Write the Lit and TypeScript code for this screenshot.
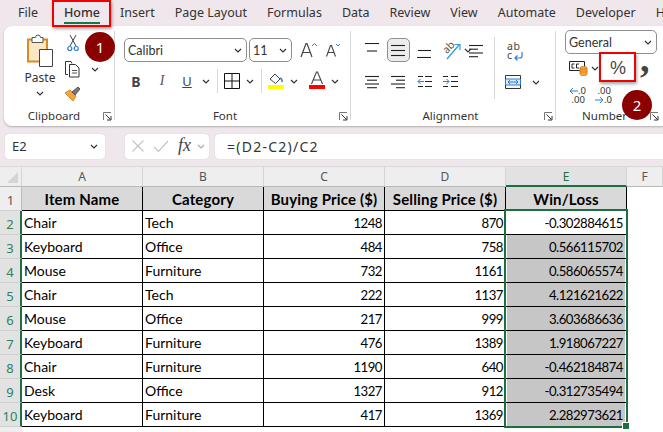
import { LitElement, css, html, svg, type TemplateResult } from 'lit';
import { customElement } from 'lit/decorators.js';

const TABS = ['File', 'Home', 'Insert', 'Page Layout', 'Formulas', 'Data', 'Review', 'View', 'Automate', 'Developer', 'H'];

const ROWS: [string, string, number, number, string][] = [
  ['Chair', 'Tech', 1248, 870, '-0.302884615'],
  ['Keyboard', 'Office', 484, 758, '0.566115702'],
  ['Mouse', 'Furniture', 732, 1161, '0.586065574'],
  ['Chair', 'Tech', 222, 1137, '4.121621622'],
  ['Mouse', 'Office', 217, 999, '3.603686636'],
  ['Keyboard', 'Furniture', 476, 1389, '1.918067227'],
  ['Chair', 'Furniture', 1190, 640, '-0.462184874'],
  ['Desk', 'Office', 1327, 912, '-0.312735494'],
  ['Keyboard', 'Furniture', 417, 1369, '2.282973621'],
];

const icon = (w: number, h: number, body: unknown): TemplateResult =>
  html`<svg width=${w} height=${h} viewBox="0 0 ${w} ${h}" fill="none" stroke="#333" stroke-width="1">${body}</svg>`;

const chevron = () => icon(8, 5, svg`<path d="M1 1l3 3 3-3" stroke-width="1.2"/>`);

const launcher = () =>
  icon(9, 9, svg`<path d="M.5 8V.5H8" stroke="#777"/><path d="M2.5 2.5l5 5M4 8h4V4" stroke="#333"/>`);

// [x, width, y] for each horizontal stroke of an alignment icon
const lines = (rows: [number, number, number][]) =>
  icon(15, 15, rows.map(([x, w, y]) => svg`<path d="M${x} ${y}h${w}" stroke="#222" stroke-width="1.1"/>`));

const ICONS = {
  paste: icon(28, 33, svg`
    <path d="M2 5.500h19v22H2z" fill="#fbe7c4" stroke="#d98a22" stroke-width="2"/>
    <path d="M6 3.500h3.500a2.500 2.500 0 0 1 5 0H17v5H6z" fill="#fff" stroke="#555"/>
    <path d="M13.500 15.500h13v17h-13z" fill="#fff" stroke="#444"/>`),
  scissors: icon(12, 18, svg`
    <path d="M3 1l6 11M9 1L3 12" stroke="#444"/>
    <circle cx="2.800" cy="14.500" r="2" stroke="#2b7cd3" stroke-width="1.200"/>
    <circle cx="9.200" cy="14.500" r="2" stroke="#2b7cd3" stroke-width="1.200"/>`),
  copy: icon(17, 18, svg`
    <path d="M4 14.500H1.500V1.500h5.500l1 2" stroke="#333"/>
    <path d="M5.500 4.500h6l3.500 3.500v9h-9.500z" fill="#fff" stroke="#333"/>
    <path d="M8 10.500h5M8 13h5" stroke="#555"/>`),
  brush: icon(17, 17, svg`
    <path d="M1 7l8 8 3-5-6-6z" fill="#f2a53a" stroke="#d98a22"/>
    <path d="M3 12l3 3M2 9l4 5" stroke="#fff"/>
    <path d="M8 6l6-5 2 2-5 6z" fill="#777" stroke="#555"/>`),
  grow: icon(17, 16, svg`<path d="M1 15L6 1.500h1L12 15M3 10.500h7" stroke="#444" stroke-width="1.200"/><path d="M12 4l2.500-2.500L17 4" stroke="#2b7cd3"/>`),
  shrink: icon(15, 14, svg`<path d="M.5 13.500L4.500 2.500h1l4 11M2 9.500h6" stroke="#444" stroke-width="1.100"/><path d="M10 1l2 2 2-2" stroke="#2b7cd3"/>`),
  borders: icon(16, 16, svg`<path d="M.5.500h15v15H.5zM8 .500v15M.5 8h15" stroke="#111"/>`),
  fill: icon(16, 20, svg`
    <path d="M2 8l5-5 5 5-4.500 4.500z" fill="#fff" stroke="#444"/>
    <path d="M12 7c2 1 2.500 3 2 4" stroke="#2b7cd3" stroke-width="1.600"/>
    <rect y="14" width="16" height="4" fill="#ffff00" stroke="none"/>`),
  fontColor: icon(16, 20, svg`
    <path d="M2.500 13L7.500 1h1l5 12M4.500 9h7" stroke="#444" stroke-width="1.100"/>
    <rect y="14" width="16" height="4" fill="#ff0000" stroke="none"/>`),
  orientArrow: icon(20, 20, svg`
    <path d="M5 19L17 5M12.500 4.500h5.500V10" stroke="#2b9be0" stroke-width="1.200"/>`),
  wrap: icon(18, 19, svg`
    <path d="M15 9v4a2 2 0 0 1-2 2H8M10.500 12.500L8 15l2.500 2.500" stroke="#2b7cd3" stroke-width="1.200"/>`),
  merge: icon(16, 16, svg`
    <path d="M.5 1.500h15M.5 14.500h15" stroke="#333"/>
    <path d="M.5 5h15v6H.5z" fill="#d8ecf9" stroke="#2b7cd3"/>
    <path d="M.5 1.500V5M15.500 1.500V5M.5 11v3.500M15.500 11v3.500" stroke="#333"/>
    <path d="M3 8h10M5 6l-2 2 2 2M11 6l2 2-2 2" stroke="#2b7cd3"/>`),
  indentLess: icon(15, 15, svg`
    <path d="M8 2.500h7M8 7.500h7M8 12.500h7M1 12.500h5M1 2.500h5" stroke="#222"/>
    <path d="M7 7.500H1M3.500 5L1 7.500 3.500 10" stroke="#2b7cd3"/>`),
  indentMore: icon(15, 15, svg`
    <path d="M8 2.500h7M8 7.500h7M8 12.500h7M0 12.500h5M0 2.500h5" stroke="#222"/>
    <path d="M0 7.500h6M3.500 5L6 7.500 3.500 10" stroke="#2b7cd3"/>`),
  accounting: icon(19, 16, svg`
    <path d="M.5 1.500h15v9H.5z" stroke="#222"/>
    <path d="M3 4h2.500M3 4v4h2.500M7.500 4H10M7.500 4v4H10" stroke="#222"/>
    <path d="M11 8v6c0 2 7 2 7 0V8" fill="#f4a83c" stroke="#d9801f"/>
    <ellipse cx="14.500" cy="8" rx="3.500" ry="1.500" fill="#f4a83c" stroke="#d9801f"/>
    <path d="M11 11c0 1.500 7 1.500 7 0" stroke="#d9801f"/>`),
  cross: icon(14, 14, svg`<path d="M1.500 1.500l11 11M12.500 1.500l-11 11" stroke="#c4c4c4" stroke-width="1.200"/>`),
  check: icon(16, 14, svg`<path d="M1 8l4.500 4.500L15 2" stroke="#c4c4c4" stroke-width="1.200"/>`),
  arrowLeft: icon(9, 8, svg`<path d="M9 4H1M4 1L1 4l3 3" stroke="#2b7cd3"/>`),
  arrowRight: icon(9, 8, svg`<path d="M0 4h8M5 1l3 3-3 3" stroke="#2b7cd3"/>`),
};

@customElement('app-root')
export class AppRoot extends LitElement {
  private group(label: string, width: number, body: TemplateResult, cls = '') {
    return html`<section class="group ${cls}" style="width:${width}px">
      <div class="group-body">${body}</div>
      <footer class="group-foot"><span class="group-label">${label}</span><span class="launch">${launcher()}</span></footer>
    </section>`;
  }

  private clipboard() {
    return html`<div class="paste">
        ${ICONS.paste}
        <span class="paste-label">Paste</span>
        ${chevron()}
      </div>
      <div class="clip-tools">
        ${ICONS.scissors}
        <div class="copy-row">${ICONS.copy}<span class="copy-chev">${chevron()}</span></div>
        ${ICONS.brush}
      </div>`;
  }

  private font() {
    return html`<div class="font-rows">
      <div class="font-top">
        <div class="select font-name"><span>Calibri</span>${chevron()}</div>
        <div class="select font-size"><span>11</span>${chevron()}</div>
        <span class="grow">${ICONS.grow}</span>
        <span class="shrink">${ICONS.shrink}</span>
      </div>
      <div class="font-bottom">
        <b class="style-b">B</b>
        <i class="style-i">I</i>
        <u class="style-u">U</u>
        <span class="chev-u">${chevron()}</span>
        <span class="vsep"></span>
        ${ICONS.borders}
        <span class="chev-f">${chevron()}</span>
        <span class="vsep"></span>
        ${ICONS.fill}
        <span class="chev-f">${chevron()}</span>
        <span class="color-a">${ICONS.fontColor}</span>
        <span class="chev-f">${chevron()}</span>
      </div>
    </div>`;
  }

  private alignment() {
    return html`<div class="align-main">
        <div class="align-grid">
          ${lines([[0, 14, 0.5], [2, 10, 8]])}
          <span class="pressed">${lines([[0, 14, 2.5], [0, 14, 7.5], [0, 14, 12.5]])}</span>
          ${lines([[1, 13, 7.5], [0, 14, 14.5]])}
          <span class="orient">
            <span class="orient-text">ab</span>${ICONS.orientArrow}<span class="chev-o">${chevron()}</span>
          </span>
          ${lines([[0, 14, 2.5], [0, 9, 6.2], [0, 14, 10], [0, 9, 13.7]])}
          ${lines([[0, 14, 2.5], [2, 10, 6.2], [0, 14, 10], [2, 10, 13.7]])}
          ${lines([[0, 14, 2.5], [5, 9, 6.2], [0, 14, 10], [5, 9, 13.7]])}
          ${ICONS.indentLess}
          ${ICONS.indentMore}
        </div>
        <span class="vsep tall"></span>
        <div class="wrap-col">
          <div class="wrap"><span class="wrap-text">ab<br />c</span><span class="wrap-arrow">${ICONS.wrap}</span></div>
          <div class="merge">${ICONS.merge}<span class="chev-m">${chevron()}</span></div>
        </div>
      </div>`;
  }

  private number() {
    return html`<div class="num-rows">
      <div class="select num-format"><span>General</span>${chevron()}</div>
      <div class="num-tools">
        ${ICONS.accounting}
        <span class="chev-ac">${chevron()}</span>
        <span class="percent">%</span>
        <span class="comma">,</span>
      </div>
      <div class="num-dec">
        <span class="dec">${ICONS.arrowLeft}<span class="dec-a">.0</span><span class="dec-b">.00</span></span>
        <span class="dec">
          <span class="dec-b">.00</span>${ICONS.arrowRight}<span class="dec-a">.0</span>
        </span>
      </div>
    </div>`;
  }

  render(): TemplateResult {
    return html`
      <nav class="tabs">
        ${TABS.map((t) => html`<span class="tab ${t === 'Home' ? 'active' : ''}">${t}</span>`)}
      </nav>
      <div class="ribbon">
        ${this.group('Clipboard', 111, this.clipboard(), 'g-clip')}
        ${this.group('Font', 236, this.font(), 'g-font')}
        ${this.group('Alignment', 205, this.alignment(), 'g-align')}
        ${this.group('Number', 103, this.number(), 'g-num')}
      </div>
      <div class="formula">
        <div class="box name-box"><span>E2</span>${chevron()}</div>
        <span class="dots"></span>
        <div class="box fx-box">
          ${ICONS.cross}${ICONS.check}
          <span class="fx">fx</span><span class="fx-chev">${chevron()}</span>
        </div>
        <div class="box formula-box">=(D2-C2)/C2</div>
      </div>
      <div class="sheet">
        <div class="hdr corner"><span class="tri"></span></div>
        ${['A', 'B', 'C', 'D', 'E', 'F'].map((c) => html`<div class="hdr col ${c === 'E' ? 'sel' : ''}">${c}</div>`)}

        <div class="hdr rowh">1</div>
        <div class="cell head">Item Name</div>
        <div class="cell head">Category</div>
        <div class="cell head">Buying Price ($)</div>
        <div class="cell head">Selling Price ($)</div>
        <div class="cell head">Win/Loss</div>
        <div class="blank"></div>

        ${ROWS.map(
          (r, i) => html`
            <div class="hdr rowh sel">${i + 2}</div>
            <div class="cell">${r[0]}</div>
            <div class="cell">${r[1]}</div>
            <div class="cell num">${r[2]}</div>
            <div class="cell num">${r[3]}</div>
            <div class="cell num result ${i > 0 ? 'shade' : ''}">${r[4]}</div>
            <div class="blank"></div>
          `
        )}
        <div class="hdr rowh end"></div>
        <div class="blank last"></div>

        <div class="selection"><span class="handle"></span></div>
      </div>

      <div class="red-box home-box"></div>
      <div class="red-box pct-box"></div>
      <div class="badge badge-1">1</div>
      <div class="badge badge-2">2</div>
    `;
  }

  static styles = css`
    :host {
      display: block;
      position: relative;
      width: 663px;
      height: 432px;
      overflow: hidden;
      background: #efe7eb;
      font-family: 'Noto Sans', sans-serif;
      color: #333;
    }

    svg {
      display: block;
      flex: none;
    }

    .tabs {
      display: flex;
      align-items: center;
      gap: 20px;
      height: 26px;
      padding: 0 0 2px 18px;
      box-sizing: border-box;
      font-size: 12.5px;
      white-space: nowrap;
    }

    .tab.active {
      position: relative;
      margin-left: 6px;
      font-weight: 500;
    }

    .tab.active::after {
      content: '';
      position: absolute;
      left: 0;
      right: 0;
      bottom: -3px;
      height: 2px;
      background: #107c41;
    }

    .ribbon {
      display: flex;
      width: 680px;
      height: 100px;
      margin-left: 4px;
      background: #fff;
      border-radius: 8px;
      box-shadow: 0 1px 2px rgba(0, 0, 0, 0.25);
    }

    .group {
      position: relative;
      display: flex;
      flex-direction: column;
      box-sizing: border-box;
      flex: none;
    }

    .group:not(:last-child)::after {
      content: '';
      position: absolute;
      top: 5px;
      right: 0;
      bottom: 6px;
      width: 1px;
      background: #d6d6d6;
    }

    .group-body {
      display: flex;
      flex: 1;
      min-height: 0;
    }

    .group-foot {
      position: relative;
      height: 20px;
      margin-bottom: 1px;
      display: flex;
      justify-content: center;
      align-items: center;
      font-size: 11.5px;
    }

    .launch {
      position: absolute;
      right: 3px;
      top: 7px;
    }

    .g-clip .group-foot {
      padding-right: 11px;
    }

    .g-font .group-foot {
      padding-right: 16px;
    }

    .g-align .group-foot {
      padding-left: 2px;
      padding-right: 8px;
    }

    .g-num .group-body {
      padding-left: 9px;
    }

    .g-num .group-foot {
      padding-right: 2px;
    }

    .g-num .launch {
      right: 0;
    }

    .g-num .group-label {
      margin-left: -4px;
    }

    /* clipboard */
    .g-clip .group-body {
      padding: 8px 0 0 22px;
      gap: 12px;
    }

    .paste {
      display: flex;
      flex-direction: column;
      align-items: center;
      width: 28px;
    }

    .paste-label {
      font-size: 12px;
      line-height: 14px;
      margin: 4px 0 6px;
    }

    .clip-tools {
      display: flex;
      flex-direction: column;
      align-items: flex-start;
      gap: 8px;
    }

    .clip-tools > svg:first-child {
      margin-left: 1px;
    }

    .clip-tools > svg:last-child {
      margin-left: -2px;
    }

    .copy-row {
      display: flex;
      margin-left: -2px;
    }

    .copy-chev {
      margin: 7px 0 0 10px;
    }

    /* font */
    .g-font .group-body {
      padding: 12px 0 0 9px;
    }

    .font-rows {
      display: flex;
      flex-direction: column;
      gap: 7px;
    }

    .font-top,
    .font-bottom {
      display: flex;
      align-items: center;
    }

    .select {
      box-sizing: border-box;
      height: 24px;
      display: flex;
      align-items: center;
      justify-content: space-between;
      padding: 0 4px 0 3px;
      border: 1px solid #8f8f8f;
      border-radius: 5px;
      font-family: 'Lato', sans-serif;
      font-size: 12.5px;
      color: #333;
    }

    .font-name {
      width: 123px;
    }

    .font-size {
      width: 43px;
      margin-left: 2px;
    }

    .grow {
      margin-left: 8px;
    }

    .shrink {
      margin-left: 9px;
    }

    .font-bottom {
      height: 24px;
    }

    .style-b,
    .style-i,
    .style-u {
      width: 10px;
      text-align: center;
      font-size: 14px;
      color: #444;
    }

    .style-b {
      margin-left: 7px;
      font-weight: 700;
    }

    .style-i {
      margin-left: 16px;
      font-family: 'Liberation Serif', serif;
      color: #555;
    }

    .style-u {
      margin-left: 15px;
      font-size: 13px;
    }

    .chev-u {
      margin-left: 10px;
    }

    .vsep {
      flex: none;
      width: 1px;
      height: 24px;
      background: #d6d6d6;
      margin: 0 6px 0 7px;
    }

    .chev-f {
      margin-left: 6px;
    }

    .color-a {
      margin-left: 11px;
    }

    /* alignment */
    .g-align .group-body {
      padding: 8px 0 0 0;
    }

    .align-main {
      display: flex;
    }

    .align-grid {
      display: grid;
      grid-template-columns: repeat(5, 26px);
      grid-template-rows: 24px 24px;
      row-gap: 7px;
      align-items: center;
      justify-items: center;
      align-self: flex-start;
      padding: 4px 0 0 8px;
    }

    .pressed {
      box-sizing: border-box;
      display: flex;
      align-items: center;
      justify-content: center;
      width: 23px;
      height: 24px;
      background: #ededed;
      border: 1px solid #8f8f8f;
      border-radius: 5px;
    }

    .orient {
      position: relative;
      justify-self: start;
      margin-left: 5px;
    }

    .orient-text {
      position: absolute;
      left: 0;
      top: 1px;
      font-size: 10.5px;
      line-height: 12px;
      color: #555;
      transform: rotate(-45deg);
    }

    .chev-o {
      position: absolute;
      left: 22px;
      top: 8px;
    }

    .vsep.tall {
      height: 62px;
      margin: 3px 0 0 5px;
    }

    .wrap-col {
      display: flex;
      flex-direction: column;
      padding: 8px 0 0 10px;
      gap: 11px;
    }

    .wrap {
      position: relative;
      width: 20px;
      height: 21px;
    }

    .wrap-text {
      display: block;
      padding-left: 2px;
      font-size: 10.5px;
      line-height: 8.500px;
      letter-spacing: 0.5px;
      color: #444;
    }

    .wrap-arrow {
      position: absolute;
      left: 2px;
      top: 1px;
    }

    .merge {
      display: flex;
      align-items: center;
    }

    .chev-m {
      margin-left: 11px;
    }

    /* number */
    .num-rows {
      display: flex;
      flex-direction: column;
      padding-top: 4px;
    }

    .num-format {
      width: 92px;
    }

    .num-tools {
      display: flex;
      align-items: center;
      height: 26px;
      margin-top: 1px;
      padding-left: 4px;
    }

    .chev-ac {
      margin: 0 0 0 3px;
    }

    .percent {
      width: 24px;
      margin-left: 7px;
      text-align: center;
      font-family: 'Liberation Sans', sans-serif;
      font-size: 18px;
      color: #444;
    }

    .comma {
      margin: -19px 0 0 10px;
      font-family: 'Liberation Serif', serif;
      font-size: 38px;
      line-height: 26px;
      font-weight: 700;
      color: #444;
    }

    .num-dec {
      display: flex;
      gap: 10px;
      padding: 5px 0 0 4px;
    }

    .dec {
      display: grid;
      grid-template-columns: 9px 7px;
      width: 16px;
      font-size: 9.5px;
      line-height: 9px;
      color: #333;
      align-items: center;
    }

    .dec-b {
      grid-column: 1 / 3;
      justify-self: end;
    }

    /* formula bar */
    .formula {
      display: flex;
      align-items: center;
      gap: 6px;
      height: 26px;
      margin-top: 7px;
      padding-left: 5px;
    }

    .box {
      box-sizing: border-box;
      height: 25px;
      background: #fff;
      border-radius: 4px;
      display: flex;
      align-items: center;
      font-size: 13px;
      flex: none;
      box-shadow: 0 0 1px rgba(0, 0, 0, 0.2);
    }

    .name-box {
      width: 100px;
      justify-content: space-between;
      padding: 0 7px;
    }

    .dots {
      width: 2px;
      height: 2px;
      margin: 0 4px;
      background: #444;
      box-shadow: 0 -4px 0 #444, 0 4px 0 #444;
    }

    .fx-box {
      width: 84px;
      gap: 8px;
      padding-left: 6px;
    }

    .fx {
      margin: -2px -2px 0 1px;
      font-family: 'Liberation Serif', serif;
      font-style: italic;
      font-size: 18px;
      color: #444;
    }

    .fx-chev svg {
      stroke: #aaa;
    }

    .formula-box {
      width: 460px;
      padding-left: 12px;
      font-size: 14px;
      letter-spacing: 1.250px;
    }

    /* sheet */
    .sheet {
      position: relative;
      display: grid;
      grid-template-columns: 22px 121px 121px 121px 121px 121px 1fr;
      grid-template-rows: 20px 24px repeat(9, 24px) 5px;
      margin-top: 7px;
      background: #fff;
      border-top: 1px solid #d8d8d8;
      height: 266px;
      box-sizing: border-box;
      font-family: 'Lato', sans-serif;
      font-size: 14px;
      color: #000;
    }

    .hdr {
      background: #eeeeee;
      display: flex;
      align-items: center;
      justify-content: center;
      box-sizing: border-box;
      color: #555;
      font-family: 'Noto Sans', sans-serif;
      font-size: 12px;
    }

    .corner {
      align-items: flex-end;
      justify-content: flex-end;
      padding: 0 3px 3px 0;
      border-right: 1px solid #d4d4d4;
      border-bottom: 1px solid #b8b8b8;
    }

    .tri {
      width: 0;
      height: 0;
      border-left: 11px solid transparent;
      border-bottom: 11px solid #d4d4d4;
    }

    .col {
      border-right: 1px solid #d4d4d4;
      border-bottom: 1px solid #b8b8b8;
    }

    .col.sel {
      background: #e2e2e2;
      color: #1d6f42;
      border-bottom: 2px solid #1d6f42;
    }

    .rowh {
      padding: 3px 0 0 0;
      font-size: 13px;
      border-bottom: 1px solid #cfcfcf;
      border-right: 1px solid #bbb;
    }

    .rowh.sel {
      background: #e2e2e2;
      color: #2f7f63;
      border-right: 2px solid #1d6f42;
    }

    .rowh.end {
      border: 0;
    }

    .cell {
      box-sizing: border-box;
      display: flex;
      align-items: center;
      padding: 0 2px;
      border-right: 1px solid #000;
      border-bottom: 1px solid #000;
      white-space: nowrap;
    }

    .head {
      justify-content: center;
      background: #d9d9d9;
      font-size: 15px;
      font-weight: 700;
      letter-spacing: 0.150px;
    }

    .num {
      justify-content: flex-end;
      font-size: 13.200px;
      letter-spacing: -0.500px;
    }

    .result {
      padding-right: 3px;
    }

    .shade {
      background: #c6c6c6;
      box-shadow: inset 1px 0 0 #fff, inset -1px 0 0 #fff;
    }

    .blank.last {
      grid-column: 2 / -1;
    }

    .selection {
      position: absolute;
      left: 504px;
      top: 42px;
      width: 124px;
      height: 219px;
      box-sizing: border-box;
      border: 2px solid #1d6f42;
      pointer-events: none;
    }

    .handle {
      position: absolute;
      right: -4px;
      bottom: -4px;
      width: 6px;
      height: 6px;
      background: #1d6f42;
      border: 1px solid #fff;
    }

    /* annotations */
    .red-box {
      position: absolute;
      box-sizing: border-box;
      border: 2px solid #f00000;
      box-shadow: 1px 2px 3px rgba(0, 0, 0, 0.35);
    }

    .home-box {
      left: 52px;
      top: 0;
      width: 59px;
      height: 27px;
    }

    .pct-box {
      left: 599px;
      top: 52px;
      width: 37px;
      height: 30px;
    }

    .badge {
      position: absolute;
      width: 30px;
      height: 30px;
      border-radius: 50%;
      background: #8b0000;
      color: #fff;
      display: flex;
      align-items: center;
      justify-content: center;
      font-size: 15px;
    }

    .badge-1 {
      left: 85px;
      top: 32px;
    }

    .badge-2 {
      left: 622px;
      top: 90px;
    }
  `;
}

declare global {
  interface HTMLElementTagNameMap {
    'app-root': AppRoot;
  }
}
